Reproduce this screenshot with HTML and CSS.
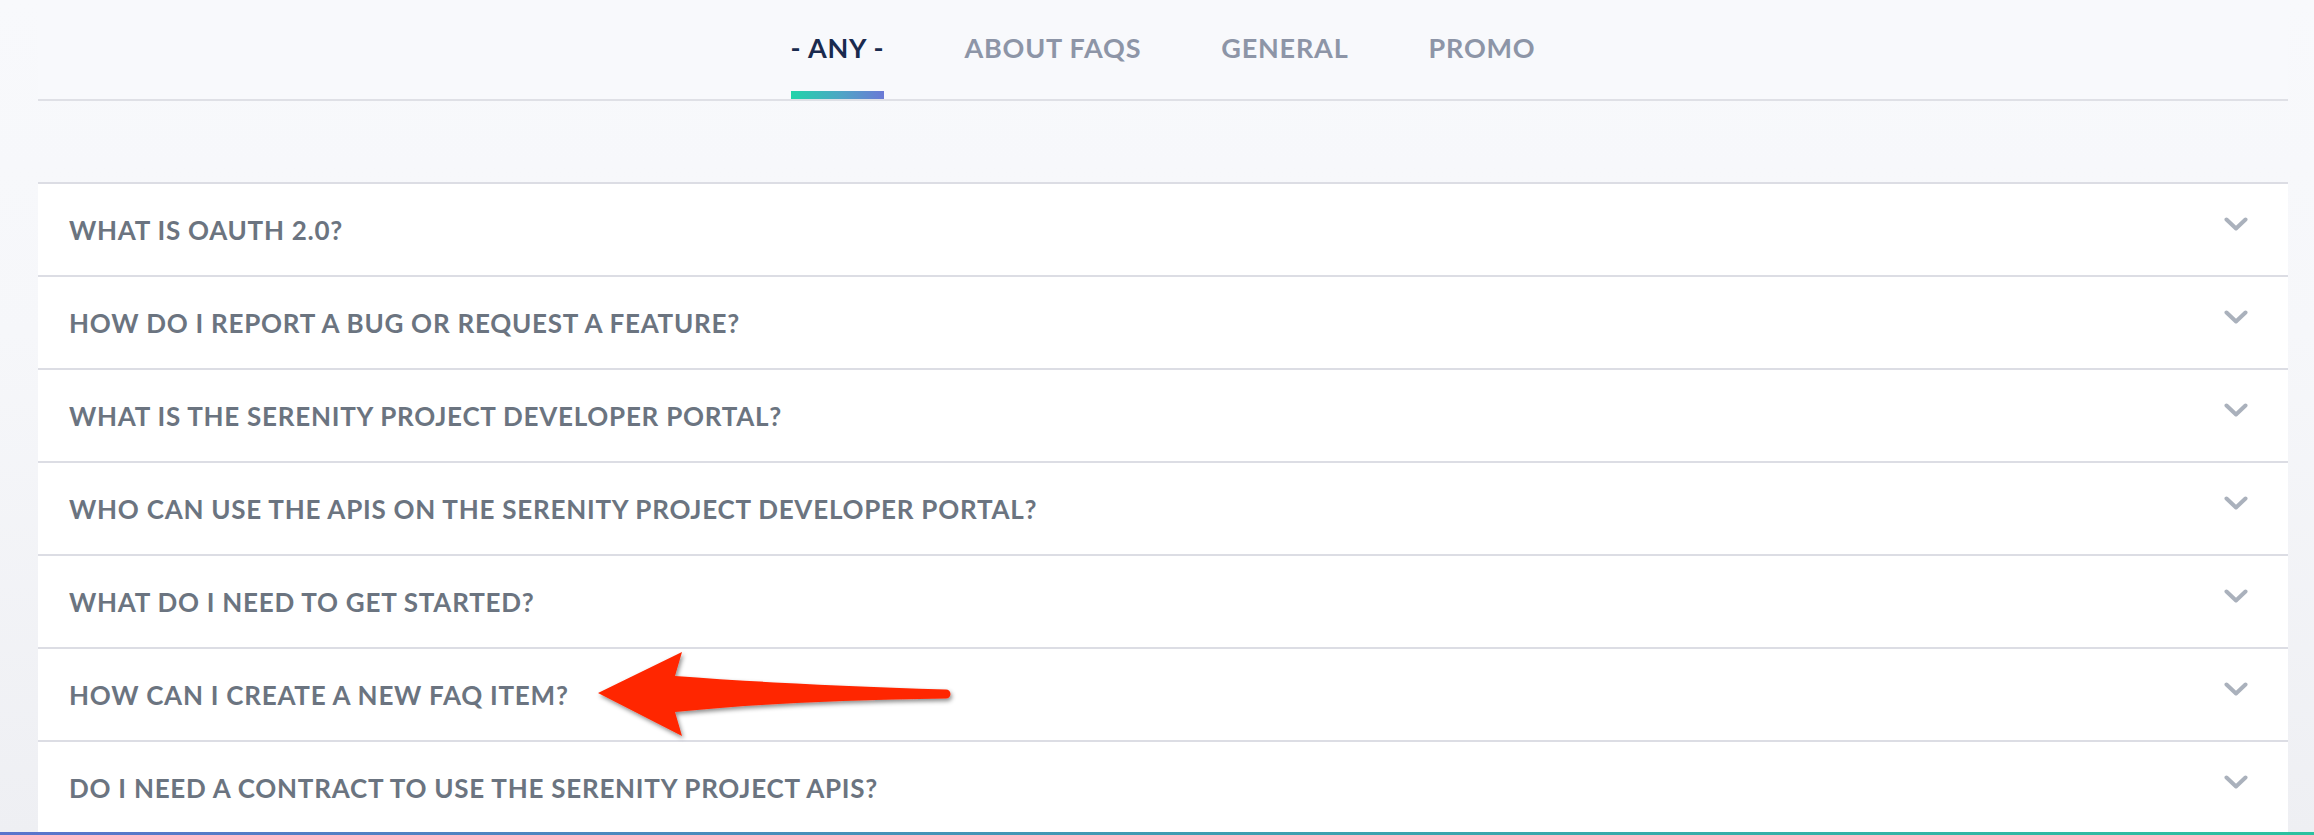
FILE: index.html
```html
<!DOCTYPE html>
<html lang="en">
<head>
<meta charset="utf-8">
<title>FAQ</title>
<link rel="stylesheet" href="styles.css">
</head>
<body>
<div class="page">
  <nav class="tabs">
    <div class="tab active"><span class="tab-label">- ANY -</span><span class="tab-bar"></span></div>
    <div class="tab"><span class="tab-label">ABOUT FAQS</span><span class="tab-bar"></span></div>
    <div class="tab"><span class="tab-label">GENERAL</span><span class="tab-bar"></span></div>
    <div class="tab"><span class="tab-label">PROMO</span><span class="tab-bar"></span></div>
  </nav>
  <div class="faq-list">
    <div class="faq-row"><span class="faq-q">WHAT IS OAUTH 2.0?</span><svg class="chev" viewBox="0 0 24 15"><path d="M2.5 2.5 L12 11.5 L21.5 2.5"/></svg></div>
    <div class="faq-row"><span class="faq-q">HOW DO I REPORT A BUG OR REQUEST A FEATURE?</span><svg class="chev" viewBox="0 0 24 15"><path d="M2.5 2.5 L12 11.5 L21.5 2.5"/></svg></div>
    <div class="faq-row"><span class="faq-q">WHAT IS THE SERENITY PROJECT DEVELOPER PORTAL?</span><svg class="chev" viewBox="0 0 24 15"><path d="M2.5 2.5 L12 11.5 L21.5 2.5"/></svg></div>
    <div class="faq-row"><span class="faq-q">WHO CAN USE THE APIS ON THE SERENITY PROJECT DEVELOPER PORTAL?</span><svg class="chev" viewBox="0 0 24 15"><path d="M2.5 2.5 L12 11.5 L21.5 2.5"/></svg></div>
    <div class="faq-row"><span class="faq-q">WHAT DO I NEED TO GET STARTED?</span><svg class="chev" viewBox="0 0 24 15"><path d="M2.5 2.5 L12 11.5 L21.5 2.5"/></svg></div>
    <div class="faq-row"><span class="faq-q">HOW CAN I CREATE A NEW FAQ ITEM?</span><svg class="chev" viewBox="0 0 24 15"><path d="M2.5 2.5 L12 11.5 L21.5 2.5"/></svg></div>
    <div class="faq-row"><span class="faq-q">DO I NEED A CONTRACT TO USE THE SERENITY PROJECT APIS?</span><svg class="chev" viewBox="0 0 24 15"><path d="M2.5 2.5 L12 11.5 L21.5 2.5"/></svg></div>
  </div>
</div>
<div class="bottom-bar"></div>
<svg class="annot-arrow" viewBox="0 0 2314 835" aria-hidden="true">
  <defs>
    <filter id="sh" x="-10%" y="-30%" width="120%" height="160%">
      <feDropShadow dx="1.5" dy="2.5" stdDeviation="2" flood-color="#000" flood-opacity="0.45"/>
    </filter>
  </defs>
  <path filter="url(#sh)" fill="#ff2600" d="M598 693 L682 652 L675 676 Q780 684 946 689.5 A4.5 4.5 0 0 1 946 698.5 Q780 701 675 712 L682 736 Z"/>
</svg>
</body>
</html>
```
FILE: styles.css
```css
html, body {
  margin: 0;
  padding: 0;
}
body {
  position: relative;
  width: 2314px;
  height: 835px;
  overflow: hidden;
  display: flex;
  flex-direction: column;
  background: linear-gradient(180deg, #f8f9fc 0%, #f6f7fa 40%, #eeeff3 100%);
  font-family: Lato, "Open Sans", sans-serif;
}
.page {
  flex: 1;
  min-height: 0;
  overflow: hidden;
  padding: 0 26px 0 38px;
}
.tabs {
  display: flex;
  justify-content: center;
  gap: 80px;
  padding-top: 33px;
  border-bottom: 2px solid #dfe0e6;
  background: #f8f9fc;
}
.tab {
  display: flex;
  flex-direction: column;
  align-items: stretch;
}
.tab-label {
  font-size: 27px;
  line-height: 30px;
  font-weight: 700;
  letter-spacing: 0.8px;
  color: #8d95a7;
  white-space: nowrap;
}
.tab.active .tab-label {
  color: #1a2a4e;
}
.tab-bar {
  margin-top: 28px;
  height: 8px;
}
.tab.active .tab-bar {
  background: linear-gradient(90deg, #22d4a9 0%, #4fa4c6 55%, #6b79d6 100%);
}
.faq-list {
  margin-top: 81px;
}
.faq-row {
  height: 91px;
  border-top: 2px solid #dcdde4;
  background: #ffffff;
  display: flex;
  align-items: center;
  justify-content: space-between;
  padding: 0 40px 0 31px;
}
.faq-q {
  font-size: 26px;
  font-weight: 700;
  letter-spacing: 0.75px;
  color: #6b7480;
  white-space: nowrap;
}
.chev {
  width: 24px;
  height: 15px;
  margin-bottom: 10px;
  fill: none;
  stroke: #aab1bc;
  stroke-width: 4;
  stroke-linecap: round;
  stroke-linejoin: round;
}
.bottom-bar {
  height: 3px;
  flex: none;
  background: linear-gradient(90deg, #5a74cc 0%, #3f9bb2 50%, #2bc19f 100%);
}
.annot-arrow {
  position: absolute;
  left: 0;
  top: 0;
  width: 2314px;
  height: 835px;
  pointer-events: none;
}
```
